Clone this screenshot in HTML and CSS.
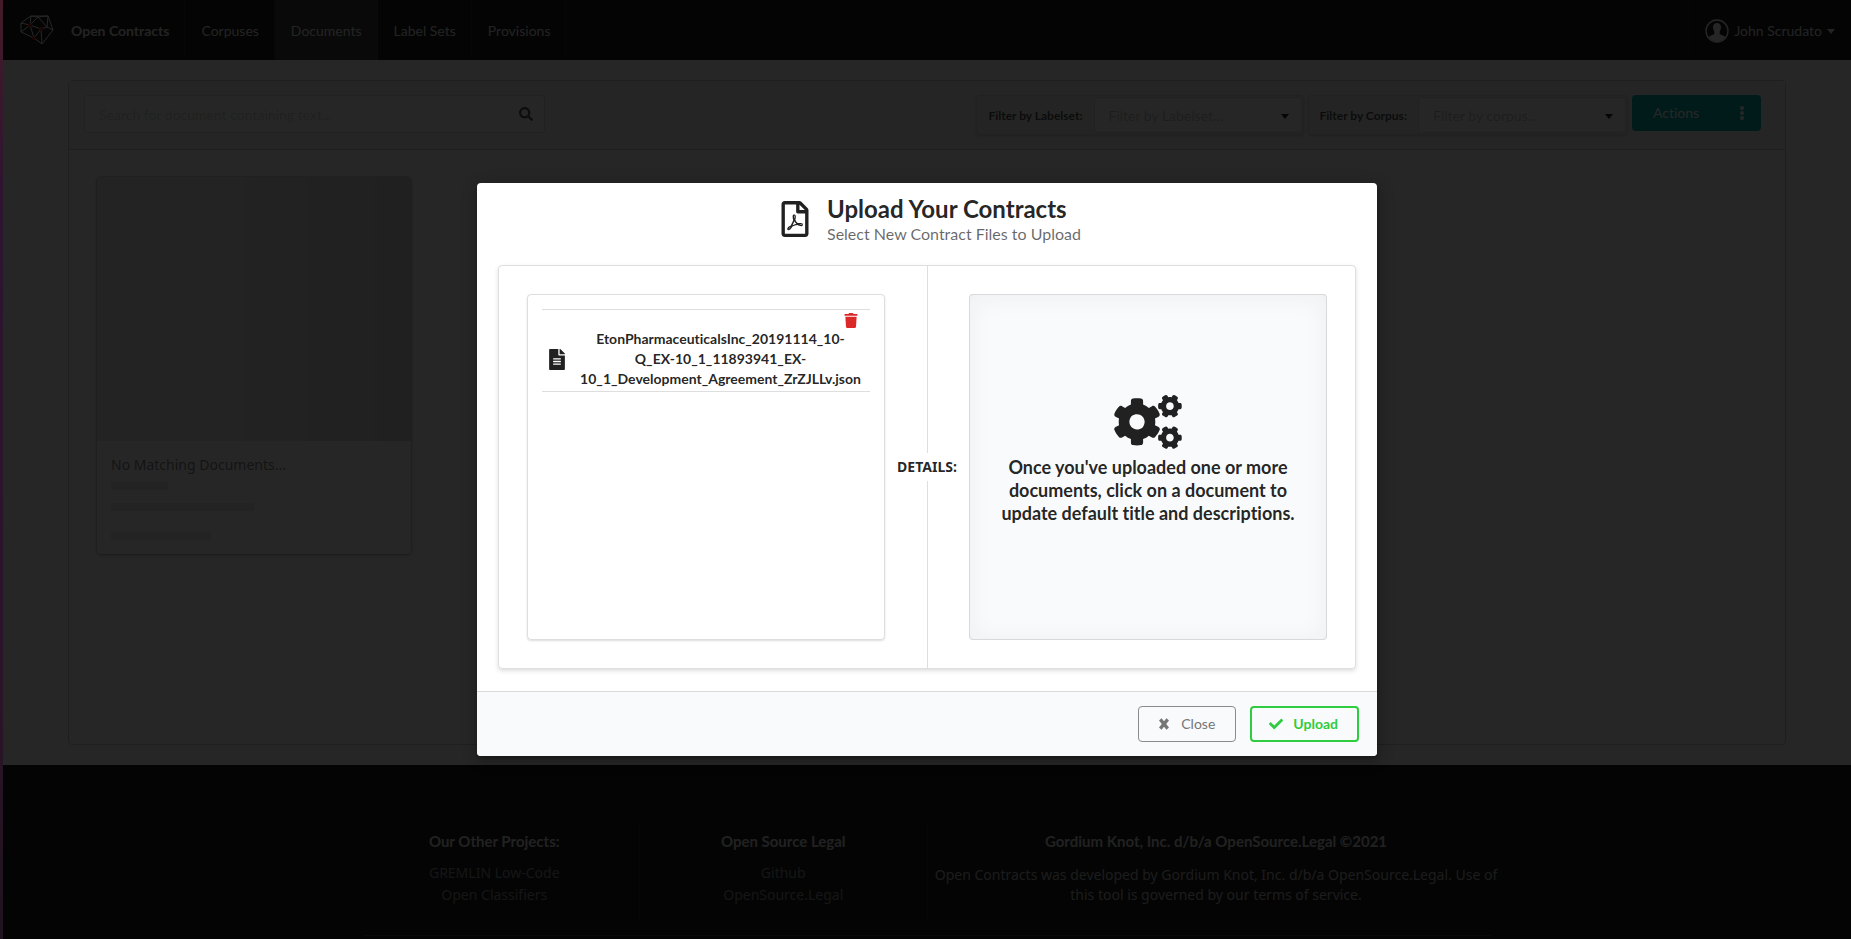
FILE: index.html
```html
<!DOCTYPE html>
<html lang="en">
<head>
<meta charset="utf-8">
<title>Open Contracts</title>
<link rel="stylesheet" href="styles.css">
</head>
<body>
<div class="edge"></div>
<div class="app">
  <nav class="navbar">
    <a class="nav-item brand" href="#">
      <svg class="logo" viewBox="0 0 35 35" fill="none" stroke="#fff" stroke-width="1" aria-hidden="true">
        <path d="M2 9 12 2 29 2 34 16 23 30 15 24 2 18Z M2 9 11 11 12 2 M11 11 19 3 28 13 M19 3 12 2 M29 2 19 3 M29 2 28 13 34 16 M11 11 22 15 28 13 M11 11 2 18 M11 11 15 24 22 15 23 30"/>
        <g fill="#c8281e" stroke="none"><circle cx="11" cy="11" r="2"/><circle cx="22" cy="15" r="2"/><circle cx="15" cy="24" r="2"/></g>
      </svg>
      <span>Open Contracts</span>
    </a>
    <a class="nav-item" href="#">Corpuses</a>
    <a class="nav-item active" href="#">Documents</a>
    <a class="nav-item" href="#">Label Sets</a>
    <a class="nav-item" href="#">Provisions</a>
    <button class="nav-item user" type="button">
      <svg class="avatar" viewBox="0 0 24 24" aria-hidden="true"><circle cx="12" cy="12" r="11" fill="none" stroke="#fff" stroke-width="1.4"/><path fill="#fff" d="M12 4c2.600 0 4 1.700 4 4.200 0 1.700-.8 3.300-1.300 4.300v2.600c1.200 1 4.200 1.500 5.600 2.700A10.500 10.500 0 0 1 12 22.500a10.500 10.500 0 0 1-8.300-4.700c1.400-1.200 4.400-1.700 5.600-2.700v-2.600C8.800 11.500 8 9.900 8 8.200 8 5.700 9.400 4 12 4z"/></svg>
      <span>John Scrudato</span>
      <svg class="caret" viewBox="0 0 8 5" aria-hidden="true"><path fill="currentColor" d="M0 0h8L4 5z"/></svg>
    </button>
  </nav>

  <main class="main">
    <section class="panel">
      <div class="toolbar">
        <div class="search">
          <input class="search-input" type="text" placeholder="Search for document containing text..." aria-label="Search documents">
          <button class="search-button" type="button" aria-label="Search"><svg viewBox="0 0 512 512"><path fill="currentColor" d="M505 442.700 405.300 343c-4.500-4.500-10.600-7-17-7H372c27.600-35.300 44-79.700 44-128C416 93.100 322.900 0 208 0S0 93.100 0 208s93.100 208 208 208c48.300 0 92.700-16.400 128-44v16.300c0 6.400 2.500 12.500 7 17l99.700 99.700c9.400 9.400 24.600 9.400 33.900 0l28.300-28.300c9.400-9.400 9.400-24.600.1-34zM208 336c-70.700 0-128-57.200-128-128 0-70.700 57.200-128 128-128 70.700 0 128 57.200 128 128 0 70.700-57.200 128-128 128z"/></svg></button>
        </div>
        <div class="filters">
          <div class="filter">
            <label class="filter-label" for="labelset">Filter by Labelset:</label>
            <div class="filter-field">
              <select class="filter-select" id="labelset"><option>Filter by Labelset...</option></select>
              <svg class="filter-caret" viewBox="0 0 8 5" aria-hidden="true"><path fill="currentColor" d="M0 0h8L4 5z"/></svg>
            </div>
          </div>
          <div class="filter">
            <label class="filter-label" for="corpus">Filter by Corpus:</label>
            <div class="filter-field">
              <select class="filter-select" id="corpus"><option>Filter by corpus...</option></select>
              <svg class="filter-caret" viewBox="0 0 8 5" aria-hidden="true"><path fill="currentColor" d="M0 0h8L4 5z"/></svg>
            </div>
          </div>
          <button class="actions" type="button">
            <span>Actions</span>
            <svg class="dots" viewBox="0 0 4 14" aria-hidden="true"><g fill="currentColor"><circle cx="2" cy="2" r="2"/><circle cx="2" cy="7" r="2"/><circle cx="2" cy="12" r="2"/></g></svg>
          </button>
        </div>
      </div>
      <div class="cards">
        <article class="card">
          <div class="card-image"></div>
          <div class="card-body">
            <p class="card-title">No Matching Documents...</p>
            <div class="bar bar-short"></div>
            <div class="bar bar-long"></div>
            <div class="bar bar-medium"></div>
          </div>
        </article>
      </div>
    </section>
  </main>

  <footer class="footer">
    <div class="footer-grid">
      <div class="footer-col">
        <h4 class="footer-title">Our Other Projects:</h4>
        <a class="footer-link" href="#">GREMLIN Low-Code</a>
        <a class="footer-link" href="#">Open Classifiers</a>
      </div>
      <div class="footer-col">
        <h4 class="footer-title">Open Source Legal</h4>
        <a class="footer-link" href="#">Github</a>
        <a class="footer-link" href="#">OpenSource.Legal</a>
      </div>
      <div class="footer-col">
        <h4 class="footer-title">Gordium Knot, Inc. d/b/a OpenSource.Legal ©2021</h4>
        <p class="footer-text">Open Contracts was developed by Gordium Knot, Inc. d/b/a OpenSource.Legal. Use of this tool is governed by our terms of service.</p>
      </div>
    </div>
    <div class="footer-rule"></div>
  </footer>

  <div class="dimmer">
    <div class="modal" role="dialog" aria-modal="true" aria-labelledby="modal-title">
      <header class="modal-header">
        <svg class="pdf-icon" viewBox="0 0 384 512" aria-hidden="true"><path fill="currentColor" d="M369.900 97.900L286 14C277 5 264.800-.1 252.100-.1H48C21.500 0 0 21.500 0 48v416c0 26.500 21.500 48 48 48h288c26.500 0 48-21.500 48-48V131.900c0-12.700-5.100-25-14.100-34zM332.100 128H256V51.900l76.100 76.100zM48 464V48h160v104c0 13.300 10.700 24 24 24h104v288H48zm250.200-143.700c-12.200-12-47-8.700-64.400-6.500-17.200-10.500-28.700-25-36.800-46.300 3.900-16.100 10.100-40.600 5.400-56-4.200-26.200-37.800-23.600-42.600-5.900-4.400 16.100-.4 38.500 7 67.100-10 23.900-24.900 56-35.400 74.400-20 10.300-47 26.200-51 46.200-3.300 15.800 26 55.200 76.100-31.200 22.400-7.400 46.800-16.500 68.400-20.100 18.900 10.200 41 17 55.800 17 25.500 0 28-28.200 17.500-38.700zm-198.100 77.800c5.100-13.700 24.500-29.500 30.400-35-19 30.300-30.400 35.700-30.400 35zm81.600-190.600c7.400 0 6.700 32.100 1.800 40.800-4.400-13.900-4.300-40.800-1.800-40.800zm-24.400 136.600c9.700-16.900 18-37 24.700-54.700 8.300 15.100 18.900 27.200 30.100 35.500-20.800 4.300-38.900 13.100-54.800 19.200zm131.600-5s-5 6-37.300-7.800c35.100-2.600 40.900 5.400 37.300 7.800z"/></svg>
        <div>
          <h2 class="modal-title" id="modal-title">Upload Your Contracts</h2>
          <p class="modal-subtitle">Select New Contract Files to Upload</p>
        </div>
      </header>
      <div class="modal-content">
        <div class="split">
          <div class="split-col">
            <div class="file-box">
              <div class="file-row">
                <svg class="file-icon" viewBox="0 0 384 512" aria-hidden="true"><path fill="currentColor" d="M224 136V0H24C10.700 0 0 10.700 0 24v464c0 13.300 10.700 24 24 24h336c13.300 0 24-10.700 24-24V160H248c-13.200 0-24-10.800-24-24zm64 236c0 6.600-5.400 12-12 12H108c-6.600 0-12-5.400-12-12v-8c0-6.600 5.400-12 12-12h168c6.600 0 12 5.400 12 12v8zm0-64c0 6.600-5.400 12-12 12H108c-6.600 0-12-5.400-12-12v-8c0-6.600 5.400-12 12-12h168c6.600 0 12 5.400 12 12v8zm0-72v8c0 6.600-5.400 12-12 12H108c-6.600 0-12-5.400-12-12v-8c0-6.600 5.400-12 12-12h168c6.600 0 12 5.400 12 12zm96-114.100v6.100H256V0h6.100c6.400 0 12.500 2.500 17 7l97.900 98c4.500 4.500 7 10.600 7 16.900z"/></svg>
                <div class="file-content">
                  <button class="trash" type="button" aria-label="Remove file"><svg viewBox="0 0 448 512"><path fill="currentColor" d="M432 32H312l-9.400-18.700A24 24 0 0 0 281.100 0H166.800a23.720 23.720 0 0 0-21.400 13.300L136 32H16A16 16 0 0 0 0 48v32a16 16 0 0 0 16 16h416a16 16 0 0 0 16-16V48a16 16 0 0 0-16-16zM53.200 467a48 48 0 0 0 47.900 45h245.800a48 48 0 0 0 47.900-45L416 128H32z"/></svg></button>
                  <p class="file-name">EtonPharmaceuticalsInc_20191114_10-Q_EX-10_1_11893941_EX-10_1_Development_Agreement_ZrZJLLv.json</p>
                </div>
              </div>
            </div>
          </div>
          <div class="split-divider"><span>DETAILS:</span></div>
          <div class="split-col">
            <div class="detail-box">
              <svg class="cogs" viewBox="0 0 640 512" aria-hidden="true"><path fill="currentColor" d="M512.100 191l-8.200 14.300c-3 5.300-9.400 7.500-15.100 5.400-11.800-4.400-22.600-10.700-32.100-18.600-4.600-3.800-5.800-10.500-2.800-15.700l8.200-14.300c-6.900-8-12.300-17.300-15.900-27.400h-16.500c-6 0-11.200-4.300-12.200-10.300-2-12-2.100-24.600 0-37.100 1-6 6.200-10.400 12.200-10.400h16.500c3.600-10.100 9-19.400 15.900-27.400l-8.200-14.300c-3-5.200-1.900-11.900 2.800-15.700 9.500-7.900 20.400-14.200 32.100-18.600 5.700-2.100 12.100.1 15.100 5.400l8.200 14.300c10.500-1.900 21.200-1.900 31.700 0L552 6.300c3-5.300 9.400-7.500 15.100-5.400 11.800 4.400 22.600 10.700 32.100 18.600 4.600 3.800 5.800 10.500 2.800 15.700l-8.200 14.300c6.900 8 12.300 17.300 15.900 27.400h16.500c6 0 11.200 4.300 12.200 10.300 2 12 2.100 24.600 0 37.100-1 6-6.200 10.400-12.200 10.400h-16.500c-3.600 10.100-9 19.400-15.900 27.400l8.200 14.300c3 5.200 1.900 11.900-2.800 15.700-9.500 7.900-20.400 14.200-32.100 18.600-5.700 2.100-12.100-.1-15.100-5.400l-8.200-14.300c-10.400 1.900-21.200 1.900-31.700 0zm-10.500-58.800c38.500 29.600 82.400-14.300 52.800-52.800-38.500-29.700-82.400 14.300-52.800 52.800zM386.300 286.100l33.700 16.800c10.100 5.800 14.500 18.100 10.500 29.100-8.900 24.200-26.400 46.400-42.600 65.800-7.400 8.900-20.200 11.100-30.300 5.300l-29.100-16.800c-16 13.700-34.600 24.600-54.900 31.700v33.600c0 11.600-8.300 21.600-19.700 23.600-24.600 4.200-50.400 4.400-75.900 0-11.500-2-20-11.900-20-23.600V418c-20.300-7.200-38.900-18-54.900-31.700L74 403c-10 5.800-22.900 3.600-30.300-5.300-16.200-19.400-33.300-41.600-42.200-65.700-4-10.900.4-23.200 10.500-29.100l33.300-16.800c-3.900-20.900-3.900-42.400 0-63.400L12 205.800c-10.100-5.800-14.600-18.100-10.500-29 8.900-24.200 26-46.400 42.200-65.800 7.400-8.900 20.200-11.100 30.300-5.300l29.100 16.800c16-13.700 34.600-24.600 54.900-31.700V57.100c0-11.500 8.200-21.500 19.600-23.500 24.600-4.200 50.500-4.400 76-.1 11.500 2 20 11.900 20 23.600v33.600c20.300 7.200 38.900 18 54.900 31.700l29.100-16.800c10-5.800 22.900-3.600 30.300 5.300 16.200 19.400 33.200 41.600 42.100 65.800 4 10.900.1 23.200-10 29.100l-33.700 16.800c3.900 21 3.900 42.500 0 63.500zm-117.600 21.100c59.200-77-28.700-164.900-105.700-105.700-59.200 77 28.700 164.900 105.700 105.700zm243.400 182.700l-8.200 14.300c-3 5.300-9.400 7.500-15.100 5.400-11.800-4.400-22.600-10.700-32.100-18.600-4.600-3.800-5.800-10.500-2.800-15.700l8.200-14.300c-6.900-8-12.300-17.300-15.900-27.400h-16.500c-6 0-11.200-4.300-12.200-10.300-2-12-2.100-24.600 0-37.100 1-6 6.200-10.400 12.200-10.400h16.500c3.600-10.100 9-19.400 15.900-27.400l-8.200-14.300c-3-5.200-1.900-11.900 2.800-15.700 9.500-7.900 20.400-14.200 32.100-18.600 5.700-2.100 12.100.1 15.100 5.400l8.200 14.300c10.500-1.900 21.200-1.900 31.700 0l8.200-14.300c3-5.300 9.400-7.500 15.100-5.400 11.800 4.400 22.600 10.700 32.100 18.600 4.600 3.800 5.800 10.500 2.800 15.700l-8.200 14.300c6.900 8 12.300 17.300 15.900 27.400h16.500c6 0 11.200 4.300 12.200 10.300 2 12 2.100 24.600 0 37.100-1 6-6.200 10.400-12.200 10.400h-16.500c-3.600 10.100-9 19.400-15.900 27.400l8.200 14.300c3 5.200 1.900 11.900-2.800 15.700-9.500 7.900-20.400 14.200-32.100 18.600-5.700 2.100-12.100-.1-15.100-5.400l-8.200-14.300c-10.400 1.900-21.200 1.900-31.700 0zM501.600 431c38.500 29.600 82.400-14.300 52.800-52.800-38.500-29.600-82.400 14.300-52.800 52.800z"/></svg>
              <p class="detail-text">Once you've uploaded one or more documents, click on a document to update default title and descriptions.</p>
            </div>
          </div>
        </div>
      </div>
      <div class="modal-actions">
        <button class="btn btn-close" type="button">
          <svg class="btn-icon" viewBox="0 0 14 14" aria-hidden="true"><path fill="currentColor" d="M2 3.500 4.500 1.300 7 4.300 9.500 1.300 12 3.500 9.200 7 12 10.500 9.500 12.700 7 9.700 4.500 12.700 2 10.500 4.800 7z"/></svg>
          <span>Close</span>
        </button>
        <button class="btn btn-upload" type="button">
          <svg class="btn-icon" viewBox="0 0 512 512" aria-hidden="true"><path fill="currentColor" d="M173.898 439.404l-166.400-166.400c-9.997-9.997-9.997-26.206 0-36.204l36.203-36.204c9.997-9.998 26.207-9.998 36.204 0L192 312.690 432.095 72.596c9.997-9.997 26.207-9.997 36.204 0l36.203 36.204c9.997 9.997 9.997 26.206 0 36.204l-294.400 294.401c-9.998 9.997-26.207 9.997-36.204-.001z"/></svg>
          <span>Upload</span>
        </button>
      </div>
    </div>
  </div>
</div>
</body>
</html>
```
FILE: styles.css
```css
* { box-sizing: border-box; }

body {
  margin: 0;
  display: flex;
  min-height: 100vh;
  font-family: Lato, "Liberation Sans", sans-serif;
  font-size: 14px;
  line-height: 20px;
  font-variant-ligatures: none;
  color: rgba(0, 0, 0, .87);
}

h2, h4, p { margin: 0; }
a { color: inherit; text-decoration: none; }
button, input, select { font: inherit; color: inherit; }
svg { display: block; }

.edge {
  width: 3px;
  flex: none;
  background: linear-gradient(#441c28, #2e1430 20%, #2a1428 75%, #20141e);
}

.app {
  position: relative;
  flex: 1;
  min-width: 0;
  display: flex;
  flex-direction: column;
}

/* Navigation */
.navbar {
  display: flex;
  height: 60px;
  background: #1b1c1d;
  color: rgba(255, 255, 255, .9);
}

.nav-item {
  display: flex;
  align-items: center;
  padding: 2px 16px 0;
  border: 0;
  background: none;
  box-shadow: inset -1px 0 rgba(255, 255, 255, .08);
}

.nav-item.active { background: #3d3e3f; }
.brand { gap: 17px; font-weight: 700; }
.logo { width: 35px; height: 35px; }

.user {
  margin-left: auto;
  gap: 5px;
  box-shadow: inset 1px 0 rgba(255, 255, 255, .08);
}

.avatar { width: 24px; height: 24px; }
.caret { width: 8px; height: 5px; }

/* Document list */
.main {
  flex: 1;
  display: flex;
  padding: 20px 65px;
  background: #fff;
}

.panel {
  flex: 1;
  min-width: 0;
  border: 1px solid rgba(34, 36, 38, .22);
  border-radius: 4px;
}

.toolbar {
  display: flex;
  justify-content: space-between;
  align-items: flex-start;
  height: 69px;
  padding: 14px 24px 0 15px;
  border-bottom: 1px solid rgba(34, 36, 38, .22);
  background: #f3f4f5;
}

.search {
  display: flex;
  align-items: center;
  width: 461px;
  height: 38px;
  border: 1px solid rgba(34, 36, 38, .15);
  border-radius: 4px;
  background: #fff;
}

.search-input {
  flex: 1;
  min-width: 0;
  padding: 2px 14px 0;
  border: 0;
  background: none;
}

.search-input::placeholder { color: rgba(0, 0, 0, .18); opacity: 1; }

.search-button {
  padding: 0 11px;
  border: 0;
  background: none;
  color: rgba(0, 0, 0, .65);
}

.search-button svg { width: 14px; height: 14px; }

.filters { display: flex; gap: 4px; }

.filter {
  display: flex;
  height: 40px;
  padding: 1px;
  border: 1px solid rgba(34, 36, 38, .08);
  border-radius: 4px;
  background: #efefef;
  box-shadow: 0 1px 2px rgba(34, 36, 38, .15);
}

.filter-label {
  padding: 9px 11px 9px 10px;
  font-size: 12px;
  font-weight: 700;
  color: rgba(0, 0, 0, .7);
}

.filter-field { position: relative; width: 208px; }

.filter-select {
  width: 100%;
  height: 100%;
  padding: 2px 32px 0 14px;
  border: 1px solid rgba(34, 36, 38, .15);
  border-radius: 4px;
  background: #fff;
  color: rgba(0, 0, 0, .25);
  appearance: none;
}

.filter-caret {
  position: absolute;
  top: 17px;
  right: 13px;
  width: 8px;
  height: 5px;
  pointer-events: none;
}

.actions {
  display: flex;
  align-items: center;
  justify-content: space-between;
  width: 129px;
  height: 36px;
  padding: 0 17px 0 21px;
  border: 0;
  border-radius: 4px;
  background: #00b5ad;
  color: #fff;
}

.dots { width: 4px; height: 14px; }
.cards { padding: 27px 28px; }

.card {
  width: 314px;
  border-radius: 4px;
  overflow: hidden;
  background: #fff;
  box-shadow: 0 1px 4px 0 rgba(0, 0, 0, .25), 0 0 0 1px rgba(0, 0, 0, .1);
}

.card-image {
  height: 264px;
  background: linear-gradient(90deg, #ebebeb 30%, #d5d5d5);
}

.card-body { padding: 14px; }

.card-title,
.footer-link,
.footer-text,
.split-divider {
  font-family: "Noto Sans", "Open Sans", sans-serif;
}

.card-title { color: rgba(0, 0, 0, .5); }

.bar { height: 8px; background: #ebebeb; }
.bar-short { width: 57px; margin-top: 7px; }
.bar-long { width: 143px; margin-top: 13px; }
.bar-medium { width: 100px; margin-top: 21px; }

/* Footer */
.footer {
  padding: 56px 20px 3px;
  background: #1b1c1d;
  color: rgba(255, 255, 255, .85);
}

.footer-grid {
  display: grid;
  grid-template-columns: 1fr 1fr 2fr;
  max-width: 1154px;
  margin: 0 auto;
}

.footer-col {
  display: flex;
  flex-direction: column;
  align-items: center;
  min-height: 99px;
  padding: 10px 4px 0;
  text-align: center;
}

.footer-col + .footer-col { border-left: 1px solid rgba(255, 255, 255, .08); }
.footer-title { margin-bottom: 11px; font-size: 15px; }
.footer-link { line-height: 22px; color: rgba(255, 255, 255, .5); }
.footer-text { padding-top: 3px; color: rgba(255, 255, 255, .7); }

.footer-rule {
  max-width: 1127px;
  margin: 15px auto 0;
  border-top: 1px solid rgba(255, 255, 255, .15);
}

/* Modal */
.dimmer {
  position: absolute;
  inset: 0;
  display: flex;
  align-items: center;
  justify-content: center;
  background: rgba(0, 0, 0, .85);
}

.modal {
  width: 900px;
  max-width: 95%;
  border-radius: 4px;
  overflow: hidden;
  background: #fff;
  box-shadow: 1px 3px 3px 0 rgba(0, 0, 0, .2), 1px 3px 15px 2px rgba(0, 0, 0, .2);
}

.modal-header {
  display: flex;
  align-items: center;
  justify-content: center;
  gap: 18px;
  height: 82px;
  padding: 0 0 11px 8px;
}

.pdf-icon { width: 28px; height: 36px; }
.modal-title { font-size: 24px; line-height: 30px; }
.modal-subtitle { font-size: 16px; color: rgba(0, 0, 0, .6); }

.modal-content { padding: 0 21px 22px; }

.split {
  display: grid;
  grid-template-columns: 1fr 84px 1fr;
  padding: 28px;
  border: 1px solid rgba(34, 36, 38, .15);
  border-radius: 4px;
  box-shadow: 0 2px 4px rgba(34, 36, 38, .15);
}

.split-col { min-width: 0; display: flex; }

.split-divider {
  display: flex;
  flex-direction: column;
  align-items: center;
  gap: 4px;
  margin: -28px 0;
  font-weight: 700;
}

.split-divider::before,
.split-divider::after {
  content: "";
  flex: 1;
  border-left: 1px solid rgba(34, 36, 38, .15);
}

.file-box,
.detail-box {
  flex: 1;
  min-width: 0;
  min-height: 346px;
  padding: 14px;
  border: 1px solid rgba(34, 36, 38, .15);
  border-radius: 4px;
}

.file-box { box-shadow: 0 1px 2px rgba(34, 36, 38, .15); }

.file-row {
  display: flex;
  align-items: center;
  gap: 8px;
  padding: 3px 0 2px 7px;
  border: 1px solid rgba(34, 36, 38, .15);
  border-width: 1px 0;
}

.file-icon { flex: none; width: 16px; height: 21px; margin-top: 16px; }
.file-content { flex: 1; min-width: 0; }

.trash {
  display: block;
  margin: 0 12px 1px auto;
  padding: 0;
  border: 0;
  background: none;
  color: #db2828;
}

.trash svg { width: 14px; height: 15px; }

.file-name {
  padding: 0 7px 0 5px;
  font-weight: 700;
  text-align: center;
  overflow-wrap: break-word;
}

.detail-box {
  display: flex;
  flex-direction: column;
  align-items: center;
  justify-content: center;
  padding: 14px 28px 28px;
  background: #f9fafb;
  box-shadow: inset 0 2px 25px 0 rgba(34, 36, 38, .05);
}

.cogs { width: 68px; height: 54px; margin-bottom: 7px; }

.detail-text {
  font-size: 18px;
  line-height: 23px;
  font-weight: 700;
  text-align: center;
}

.modal-actions {
  display: flex;
  justify-content: flex-end;
  gap: 14px;
  padding: 14px 18px 14px 14px;
  border-top: 1px solid rgba(34, 36, 38, .15);
  background: #f9fafb;
}

.btn {
  display: flex;
  align-items: center;
  gap: 10px;
  height: 36px;
  padding: 0 20px 0 18px;
  border-radius: 4px;
  background: none;
}

.btn-icon { width: 14px; height: 14px; }
.btn-close { border: 1px solid #8a8b8b; color: #767676; }

.btn-upload {
  padding: 0 19px 0 17px;
  border: 2px solid #2ecc40;
  color: #2ecc40;
  font-weight: 700;
}
```
